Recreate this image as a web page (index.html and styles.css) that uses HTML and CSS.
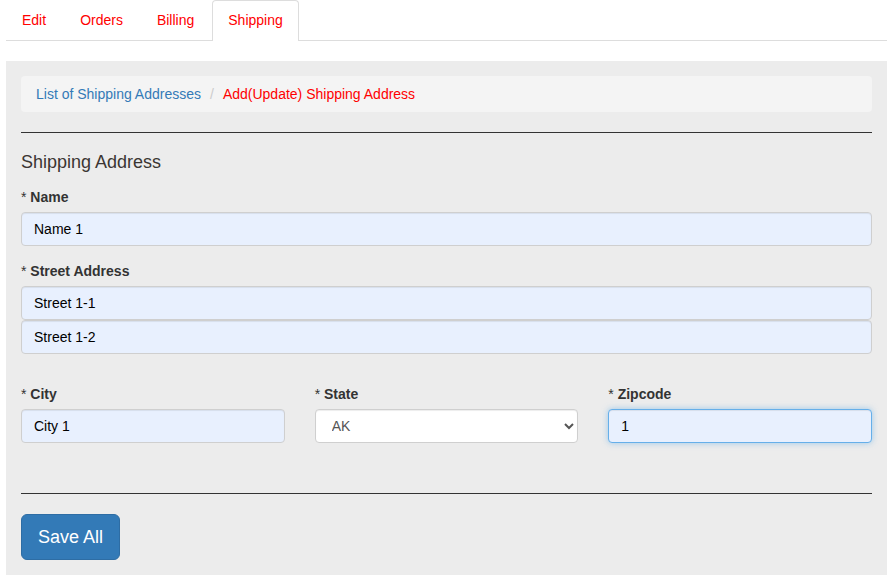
FILE: index.html
```html
<!DOCTYPE html>
<html lang="en">
<head>
<meta charset="utf-8">
<title>Shipping Address</title>
<link rel="stylesheet" href="styles.css">
</head>
<body>
<div class="page">
  <ul class="tabs">
    <li class="tab"><a href="#">Edit</a></li>
    <li class="tab"><a href="#">Orders</a></li>
    <li class="tab"><a href="#">Billing</a></li>
    <li class="tab active"><a href="#">Shipping</a></li>
  </ul>
  <div class="panel">
    <ol class="breadcrumb">
      <li><a href="#">List of Shipping Addresses</a></li>
      <li class="sep">/</li>
      <li class="current">Add(Update) Shipping Address</li>
    </ol>
    <hr class="rule">
    <h4 class="title">Shipping Address</h4>
    <div class="group">
      <label class="label"><span class="req">*</span> Name</label>
      <input class="field" type="text" value="Name 1">
    </div>
    <div class="group">
      <label class="label"><span class="req">*</span> Street Address</label>
      <input class="field" type="text" value="Street 1-1">
      <input class="field" type="text" value="Street 1-2">
    </div>
    <div class="row">
      <div class="col">
        <label class="label"><span class="req">*</span> City</label>
        <input class="field" type="text" value="City 1">
      </div>
      <div class="col">
        <label class="label"><span class="req">*</span> State</label>
        <select class="field select">
          <option>AK</option>
          <option>AL</option>
        </select>
      </div>
      <div class="col">
        <label class="label"><span class="req">*</span> Zipcode</label>
        <input class="field focus" type="text" value="1">
      </div>
    </div>
    <hr class="rule rule-bottom">
    <button class="btn" type="button">Save All</button>
  </div>
</div>
</body>
</html>
```

FILE: styles.css
```css
* { box-sizing: border-box; }

html, body {
  margin: 0;
  padding: 0;
  background: #fff;
}

body {
  font-family: "Liberation Sans", Arial, sans-serif;
  font-size: 14px;
  line-height: 20px;
  color: #333;
}

.page {
  padding: 0 7px 0 6px;
}

.tabs {
  list-style: none;
  margin: 0 0 20px;
  padding: 0;
  display: flex;
  border-bottom: 1px solid #ddd;
}

.tab {
  margin: 0 2px -1px 0;
}

.tab a {
  display: block;
  padding: 9px 15px 11px;
  line-height: 20px;
  border: 1px solid transparent;
  border-bottom: 0;
  border-radius: 4px 4px 0 0;
  color: #ff0000;
  text-decoration: none;
}

.tab.active a {
  background: #fff;
  border-color: #ddd;
  height: 41px;
}

.panel {
  background: #ececec;
  padding: 15px;
}

.breadcrumb {
  list-style: none;
  margin: 0 0 20px;
  padding: 8px 15px;
  background: #f4f4f4;
  border-radius: 4px;
  display: flex;
}

.breadcrumb a {
  color: #337ab7;
  text-decoration: none;
}

.breadcrumb .sep {
  color: #ccc;
  padding: 0 9px 0 9px;
}

.breadcrumb .current {
  color: #ff0000;
}

.rule {
  border: 0;
  border-top: 1px solid #333;
  margin: 0 0 19px;
  height: 0;
}

.title {
  margin: 0 0 15px;
  font-size: 18px;
  font-weight: normal;
  line-height: 20px;
  color: #3b3633;
}

.group {
  margin-bottom: 15px;
}

.label {
  display: block;
  font-weight: bold;
  font-size: 14px;
  line-height: 20px;
  margin-bottom: 5px;
  height: 20px;
  color: #333;
}

.req {
  font-weight: normal;
}

.field {
  display: block;
  width: 100%;
  height: 34px;
  padding: 6px 12px;
  font-family: "Liberation Sans", Arial, sans-serif;
  font-size: 14px;
  line-height: 20px;
  color: #000;
  background: #e8f0fe;
  border: 1px solid #cfcfcf;
  border-radius: 4px;
  box-shadow: inset 0 1px 1px rgba(0,0,0,.075);
  margin: 0;
}

.select {
  background: #fff;
  color: #555;
  padding: 6px 8px 6px 12px;
}

.focus {
  border-color: #66afe9;
  box-shadow: inset 0 1px 1px rgba(0,0,0,.075), 0 0 6px rgba(102,175,233,.6);
  outline: 0;
}

.row {
  display: grid;
  grid-template-columns: 1fr 1fr 1fr;
  column-gap: 30px;
  margin-top: 30px;
}

.rule-bottom {
  margin-top: 50px;
  margin-bottom: 20px;
}

.btn {
  display: block;
  padding: 10px 16px;
  font-family: "Liberation Sans", Arial, sans-serif;
  font-size: 18px;
  line-height: 24px;
  color: #fff;
  background: #337ab7;
  border: 1px solid #2e6da4;
  border-radius: 6px;
  cursor: pointer;
}
```
